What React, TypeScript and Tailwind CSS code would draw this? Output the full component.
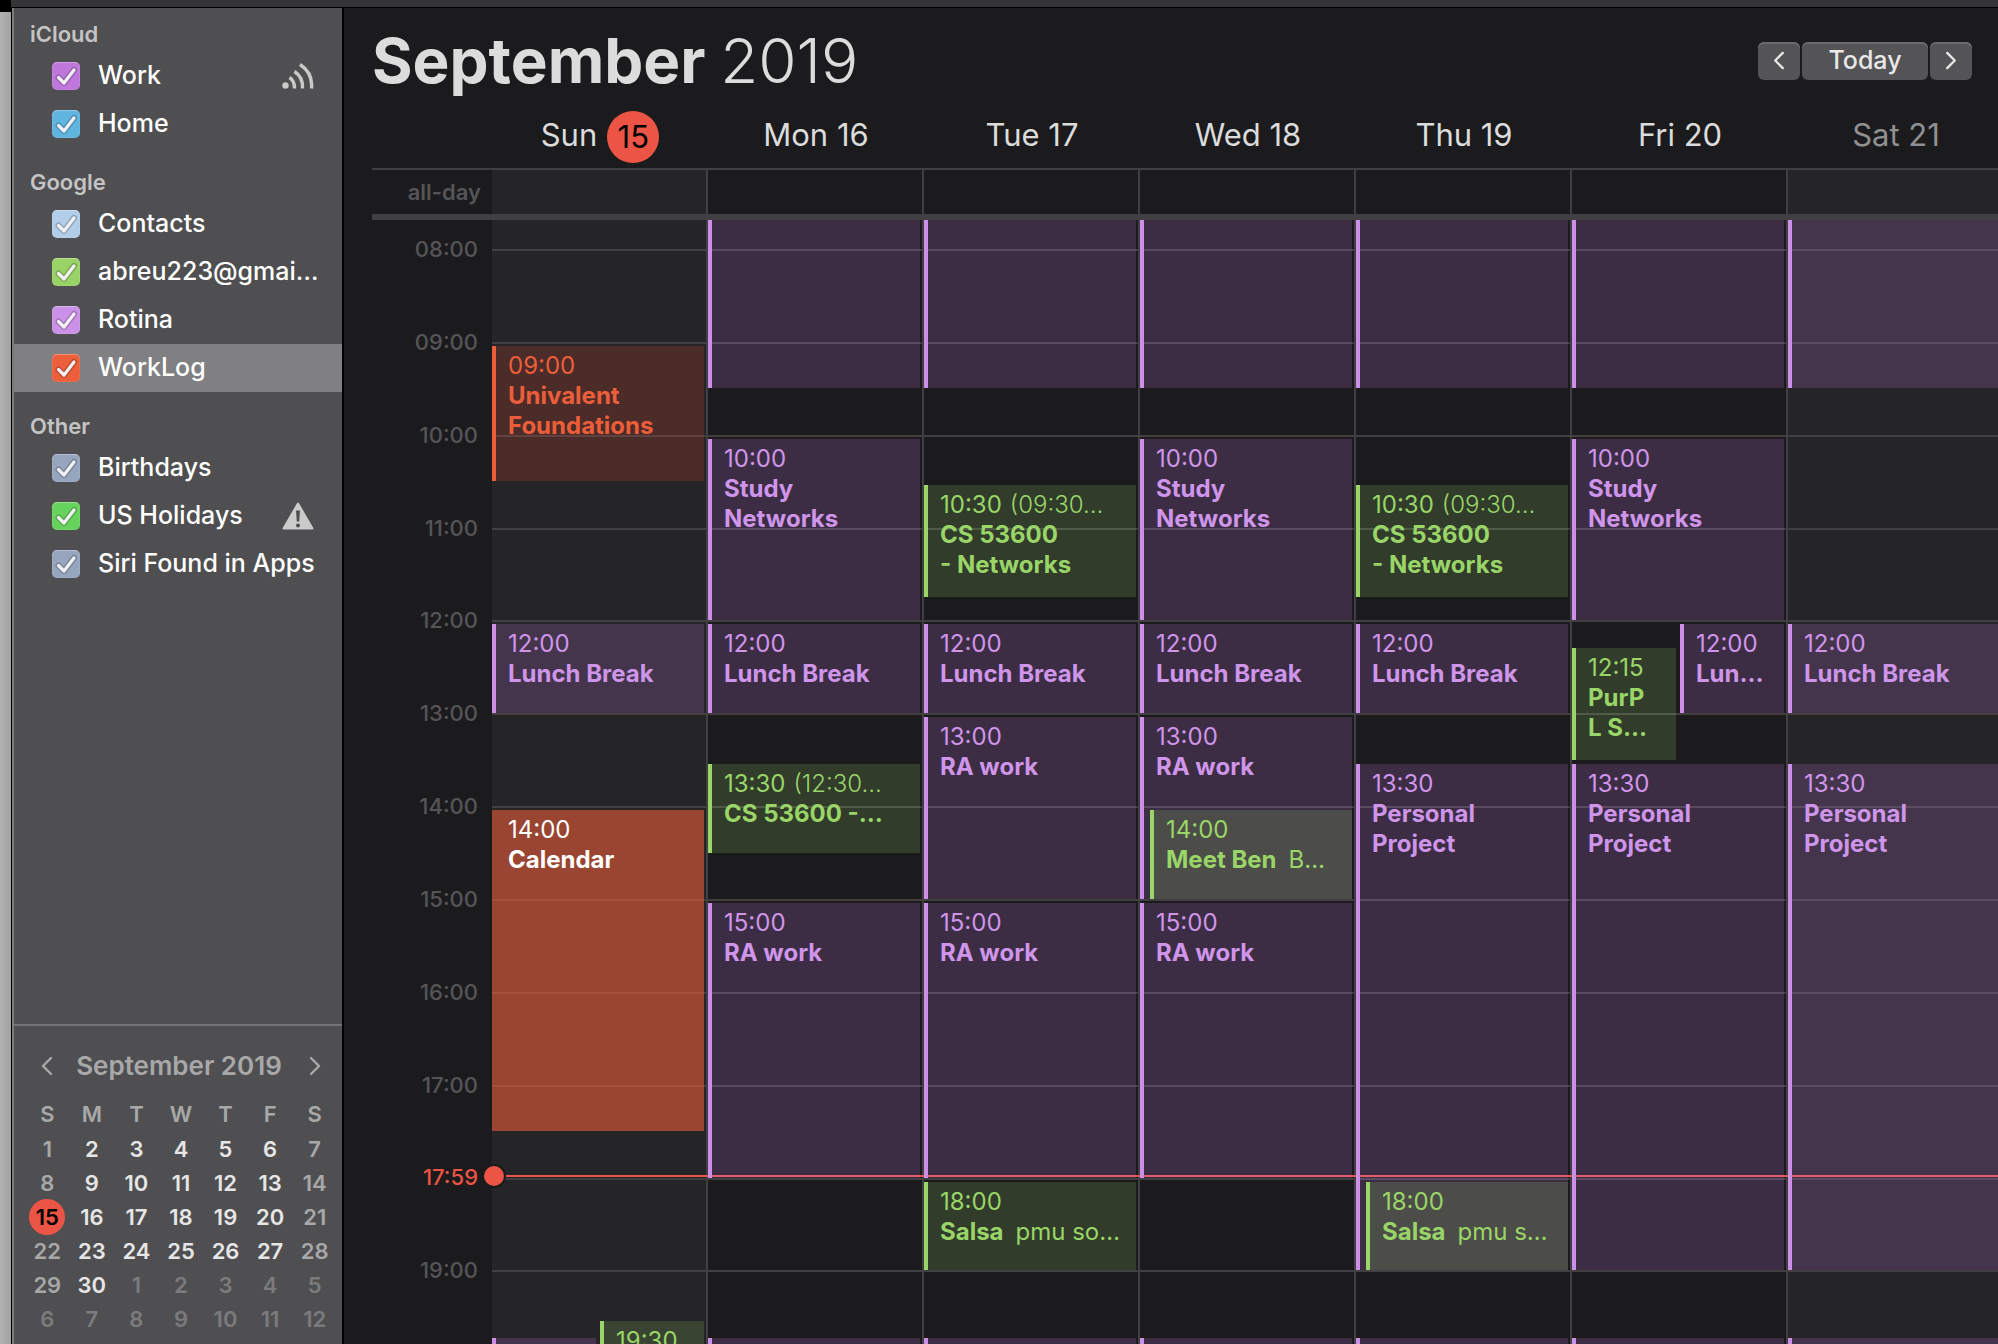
import React from 'react';

type Tone = 'purple' | 'green' | 'greenSolid' | 'orange' | 'orangeSolid';
type CalEvent = {
  day: number;
  start: number;
  end: number;
  tone: Tone;
  time?: string;
  note?: string;
  title?: string[];
  place?: string;
  slot?: 'full' | 'left' | 'right' | 'inset';
};

const TONES: Record<Tone, string> = {
  purple: 'border-l-[4px] border-[#cb8fe8] bg-[#c57ae0]/20 text-[#cf95ea]',
  green: 'border-l-[4px] border-[#9ad568] bg-[#8ec563]/20 text-[#9ad568]',
  greenSolid: 'border-l-[4px] border-[#9ad568] bg-[#4c4d48] text-[#9ad568]',
  orange: 'border-l-[4px] border-[#ec5e3a] bg-[#e54a32]/20 text-[#ec5e3a]',
  orangeSolid: 'border-l-[4px] border-transparent bg-[#ea5c3b]/60 text-white',
};

const SLOTS = {
  full: 'left-0 right-[2px]',
  left: 'left-0 right-[calc(50%+3px)]',
  right: 'left-[calc(50%+1px)] right-[2px]',
  inset: 'left-[10px] right-[2px]',
};

const FIRST_HOUR_TOP = 29;
const yOf = (hour: number) => FIRST_HOUR_TOP + Math.round(((hour - 8) * 1300) / 14);

const DAYS = ['Sun', 'Mon 16', 'Tue 17', 'Wed 18', 'Thu 19', 'Fri 20', 'Sat 21'];
const HOURS = [8, 9, 10, 11, 12, 13, 14, 15, 16, 17, 18, 19];

const lunch = (day: number): CalEvent => ({ day, start: 12, end: 13, tone: 'purple', time: '12:00', title: ['Lunch Break'] });
const study = (day: number): CalEvent => ({ day, start: 10, end: 12, tone: 'purple', time: '10:00', title: ['Study', 'Networks'] });
const project = (day: number): CalEvent => ({ day, start: 13.5, end: 19, tone: 'purple', time: '13:30', title: ['Personal', 'Project'] });
const networks = (day: number): CalEvent => ({ day, start: 10.5, end: 11.75, tone: 'green', time: '10:30', note: '(09:30…', title: ['CS 53600', '- Networks'] });
const ra = (day: number, start: number, end: number): CalEvent => ({ day, start, end, tone: 'purple', time: `${start}:00`, title: ['RA work'] });

const EVENTS: CalEvent[] = [
  ...[1, 2, 3, 4, 5, 6].map((day): CalEvent => ({ day, start: 7, end: 9.5, tone: 'purple' })),
  { day: 0, start: 9, end: 10.5, tone: 'orange', time: '09:00', title: ['Univalent', 'Foundations'] },
  lunch(0),
  { day: 0, start: 14, end: 17.5, tone: 'orangeSolid', time: '14:00', title: ['Calendar'] },
  { day: 0, start: 19.5, end: 20.5, tone: 'green', time: '19:30', slot: 'right' },
  { day: 0, start: 19.68, end: 21, tone: 'purple', slot: 'left' },
  study(1),
  lunch(1),
  { day: 1, start: 13.5, end: 14.5, tone: 'green', time: '13:30', note: '(12:30…', title: ['CS 53600 -…'] },
  ra(1, 15, 18),
  networks(2),
  lunch(2),
  ra(2, 13, 15),
  ra(2, 15, 18),
  { day: 2, start: 18, end: 19, tone: 'green', time: '18:00', title: ['Salsa'], place: 'pmu so…' },
  study(3),
  lunch(3),
  ra(3, 13, 15),
  { day: 3, start: 14, end: 15, tone: 'greenSolid', time: '14:00', title: ['Meet Ben'], place: 'B…', slot: 'inset' },
  ra(3, 15, 18),
  networks(4),
  lunch(4),
  project(4),
  { day: 4, start: 18, end: 19, tone: 'greenSolid', time: '18:00', title: ['Salsa'], place: 'pmu s…', slot: 'inset' },
  study(5),
  { day: 5, start: 12.25, end: 13.5, tone: 'green', time: '12:15', title: ['PurP', 'L S…'], slot: 'left' },
  { day: 5, start: 12, end: 13, tone: 'purple', time: '12:00', title: ['Lun…'], slot: 'right' },
  project(5),
  lunch(6),
  project(6),
  ...[1, 2, 3, 4, 5, 6].map((day): CalEvent => ({ day, start: 19.68, end: 21, tone: 'purple' })),
];

const GROUPS = [
  {
    name: 'iCloud',
    items: [
      { name: 'Work', color: 'bg-[#bf77dc]', icon: 'shared' },
      { name: 'Home', color: 'bg-[#5fb4e0]' },
    ],
  },
  {
    name: 'Google',
    items: [
      { name: 'Contacts', color: 'bg-[#b1cde8]' },
      { name: 'abreu223@gmai…', color: 'bg-[#99d267]' },
      { name: 'Rotina', color: 'bg-[#cb91e8]' },
      { name: 'WorkLog', color: 'bg-[#ec5f3a]', selected: true },
    ],
  },
  {
    name: 'Other',
    items: [
      { name: 'Birthdays', color: 'bg-[#96a6bf]' },
      { name: 'US Holidays', color: 'bg-[#66d45c]', icon: 'warning' },
      { name: 'Siri Found in Apps', color: 'bg-[#96a6bf]' },
    ],
  },
];

function Chevron({ dir, className }: { dir: 'left' | 'right'; className: string }) {
  return (
    <svg viewBox="0 0 12 20" className={className} fill="none" stroke="currentColor" strokeWidth="2.4" strokeLinecap="round" strokeLinejoin="round">
      <path d={dir === 'left' ? 'M10 2 2 10l8 8' : 'M2 2l8 8-8 8'} />
    </svg>
  );
}

function SharedIcon() {
  return (
    <svg viewBox="0 0 32 26" className="h-[26px] w-8" fill="none" stroke="#c9c9ca" strokeWidth="3.4">
      <circle cx="3.5" cy="22.5" r="3.2" fill="#c9c9ca" stroke="none" />
      <path d="M7.5 14.5C10.5 16.500 12.700 20 12.500 25.500" />
      <path d="M12.500 8.500C18 12 21 18 20.500 25.500" />
      <path d="M18 1.500C26.500 7 30.500 16 29.500 25.500" />
    </svg>
  );
}

function WarningIcon() {
  return (
    <svg viewBox="0 0 32 28" className="h-7 w-8">
      <path d="M16 1.500 30.500 26.500H1.500Z" fill="#cbcbcc" stroke="#cbcbcc" strokeWidth="2" strokeLinejoin="round" />
      <path d="M14 8.500h4l-.8 11h-2.400z" fill="#4f4f51" />
      <circle cx="16" cy="23.500" r="2" fill="#4f4f51" />
    </svg>
  );
}

function CheckBox({ id, color }: { id: string; color: string }) {
  return (
    <span className="relative grid size-7 shrink-0">
      <input id={id} type="checkbox" defaultChecked className={`peer size-7 appearance-none rounded-[5px] shadow-[inset_0_1px_0_rgba(255,255,255,0.25),inset_0_0_0_1px_rgba(255,255,255,0.08)] ${color}`} />
      <svg viewBox="0 0 28 28" className="pointer-events-none absolute inset-0 hidden size-7 peer-checked:block" fill="none" strokeLinecap="round" strokeLinejoin="round">
        <path d="M6.500 15.500 12 21 22 8" stroke="#000" strokeOpacity=".22" strokeWidth="6" />
        <path d="M6.500 15.500 12 21 22 8" stroke="#f2f0f2" strokeWidth="3.200" />
      </svg>
    </span>
  );
}

function miniClass(index: number) {
  if (index === 14) return 'text-black';
  if (index >= 30) return 'text-[#7b7b7d]';
  return index % 7 === 0 || index % 7 === 6 ? 'text-[#a8a8a9]' : 'text-[#e6e6e6]';
}

function MiniMonth() {
  const numbers = Array.from({ length: 42 }, (_, i) => (i < 30 ? i + 1 : i - 29));
  const weeks = Array.from({ length: 6 }, (_, w) => numbers.slice(w * 7, w * 7 + 7));
  return (
    <section className="border-t-2 border-[#757577] pb-2 pl-[11px] pr-[5px] text-[#a8a8a9]">
      <div className="mt-5 flex h-10 items-center justify-between px-4">
        <button aria-label="Previous month"><Chevron dir="left" className="h-5 w-3" /></button>
        <h2 className="-ml-1 text-[26px] font-semibold leading-10">September 2019</h2>
        <button aria-label="Next month"><Chevron dir="right" className="h-5 w-3" /></button>
      </div>
      <table className="mt-[10px] w-full table-fixed text-center text-[22px] leading-[34px]">
        <thead>
          <tr>
            {['S', 'M', 'T', 'W', 'T', 'F', 'S'].map((d, i) => (
              <th key={i} className="h-9 p-0 text-center font-semibold">{d}</th>
            ))}
          </tr>
        </thead>
        <tbody>
          {weeks.map((week, w) => (
            <tr key={w}>
              {week.map((n, i) => {
                const index = w * 7 + i;
                return (
                  <td key={i} className={`h-[34px] p-0 font-semibold ${miniClass(index)}`}>
                    {index === 14 ? (
                      <span className="mx-auto -my-px grid size-9 place-items-center rounded-full bg-[#ec5445]">{n}</span>
                    ) : (
                      n
                    )}
                  </td>
                );
              })}
            </tr>
          ))}
        </tbody>
      </table>
    </section>
  );
}

function Sidebar() {
  return (
    <aside className="flex w-[333px] shrink-0 flex-col border-l border-r-2 border-black bg-[#4f4f51]">
      <div className="flex grow flex-col border-l-2 border-[#7c7c7e]">
        <div className="grow">
          {GROUPS.map((group, g) => (
            <section key={group.name}>
              <h2 className={`pl-4 text-[22px] font-semibold leading-8 text-[#c4c4c5] ${g === 0 ? 'pb-[2px] pt-[10px]' : 'pb-[2px] pt-[18px]'}`}>{group.name}</h2>
              <ul>
                {group.items.map((item) => (
                  <li key={item.name} className={`flex h-12 items-center pl-[38px] pr-7 ${item.selected ? 'bg-[#808082]' : ''}`}>
                    <CheckBox id={`cal-${item.name}`} color={item.color} />
                    <label htmlFor={`cal-${item.name}`} className="ml-[18px] w-0 grow whitespace-nowrap pb-[2px] text-[25px] font-medium leading-[46px] text-white">{item.name}</label>
                    {item.icon === 'shared' && <SharedIcon />}
                    {item.icon === 'warning' && <WarningIcon />}
                  </li>
                ))}
              </ul>
            </section>
          ))}
        </div>
        <MiniMonth />
      </div>
    </aside>
  );
}

function EventBlock({ event }: { event: CalEvent }) {
  const top = Math.max(yOf(event.start) + 4, 0);
  return (
    <article
      className={`absolute overflow-hidden whitespace-nowrap pl-3 pt-[5px] text-[24px] leading-[30px] ${TONES[event.tone]} ${SLOTS[event.slot ?? 'full']}`}
      style={{ top, height: yOf(event.end) - top }}
    >
      {event.time && (
        <p>
          {event.time}
          {event.note && <span className="ml-2 font-light">{event.note}</span>}
        </p>
      )}
      {event.title?.map((line, i) => (
        <p key={i}>
          <strong className="font-bold">{line}</strong>
          {event.place && <span className="ml-3">{event.place}</span>}
        </p>
      ))}
    </article>
  );
}

function WeekView() {
  const weekend = (i: number) => i === 0 || i === 6;
  const now = yOf(18) - 2;
  return (
    <main className="flex min-w-0 grow flex-col bg-[#1b1b1d] pl-7">
      <header className="flex h-[105px] items-center justify-between pr-[26px]">
        <h1 className="text-[62px] font-bold leading-none text-[#dcdcdc]">
          September <span className="font-light">2019</span>
        </h1>
        <div className="flex gap-[2px] text-[#e8e8e8]">
          <button aria-label="Previous week" className="grid h-[38px] w-[42px] place-items-center rounded-[6px] bg-[#545456] shadow-[inset_0_2px_0_#6a6a6c]"><Chevron dir="left" className="h-[19px] w-3" /></button>
          <button className="h-[38px] w-[126px] rounded-[6px] bg-[#545456] text-[25px] font-medium shadow-[inset_0_2px_0_#6a6a6c]">Today</button>
          <button aria-label="Next week" className="grid h-[38px] w-[42px] place-items-center rounded-[6px] bg-[#545456] shadow-[inset_0_2px_0_#6a6a6c]"><Chevron dir="right" className="h-[19px] w-3" /></button>
        </div>
      </header>
      <div className="-mr-[6px] flex grow flex-col">
        <div className="grid h-[55px] grid-cols-7 pl-[120px] text-[31px] text-[#dcdcdc]">
          {DAYS.map((day, i) => (
            <div key={day} className={`flex justify-center gap-[10px] leading-[44px] ${i === 6 ? 'text-[#909091]' : ''}`}>
              {day}
              {i === 0 && <span className="-mt-[2px] grid size-[52px] place-items-center rounded-full bg-[#ec5445] text-black">15</span>}
            </div>
          ))}
        </div>
        <div className="flex h-[52px] border-b-[6px] border-t-2 border-[#404042]">
          <div className="w-[120px] shrink-0 pr-[11px] text-right text-[22px] font-semibold leading-[44px] text-[#555557]">all-day</div>
          <div className="grid grow grid-cols-7">
            {DAYS.map((day, i) => (
              <div key={day} className={`border-r-2 border-[#404042] ${weekend(i) ? 'bg-[#252527]' : ''}`} />
            ))}
          </div>
        </div>
        <div className="flex grow overflow-hidden">
          <div className="relative w-[120px] shrink-0 text-[22px] font-medium leading-7 text-[#555557]">
            {HOURS.filter((h) => h !== 18).map((h) => (
              <div key={h} className="absolute right-[14px]" style={{ top: yOf(h) - 14 }}>
                {String(h).padStart(2, '0')}:00
              </div>
            ))}
            <div className="absolute right-[14px] text-[#ec5445]" style={{ top: now - 13 }}>17:59</div>
          </div>
          <div className="relative grid grow grid-cols-7">
            {DAYS.map((day, i) => (
              <div key={day} className={`border-r-2 border-[#404042] ${weekend(i) ? 'bg-[#252527]' : ''}`} />
            ))}
            {HOURS.map((h) => (
              <div key={h} className="absolute inset-x-0 h-[2px] bg-[#404042]" style={{ top: yOf(h) }} />
            ))}
            <div className="absolute left-[14px] right-0 h-[2px] bg-[#ec5445]" style={{ top: now - 1 }} />
            <div className="absolute inset-0 grid grid-cols-7">
              {DAYS.map((day, i) => (
                <div key={day} className="relative mr-[2px]">
                  {EVENTS.filter((e) => e.day === i).map((e, k) => (
                    <EventBlock key={k} event={e} />
                  ))}
                </div>
              ))}
            </div>
            <div className="absolute -left-2 size-5 rounded-full bg-[#ec5445] ring-2 ring-[#1b1b1d]" style={{ top: now - 10 }} />
          </div>
        </div>
      </div>
    </main>
  );
}

export default function App() {
  return (
    <div className="flex h-screen overflow-hidden bg-black font-['Inter',sans-serif]">
      <div className="w-[11px] shrink-0 border-t-[12px] border-black bg-linear-to-r from-[#b2b2b2] to-[#a2a2a2]" />
      <div className="flex min-w-0 grow flex-col">
        <div className="h-2 shrink-0 border-b border-black bg-[#343436]" />
        <div className="flex min-h-0 grow">
          <Sidebar />
          <WeekView />
        </div>
      </div>
    </div>
  );
}
